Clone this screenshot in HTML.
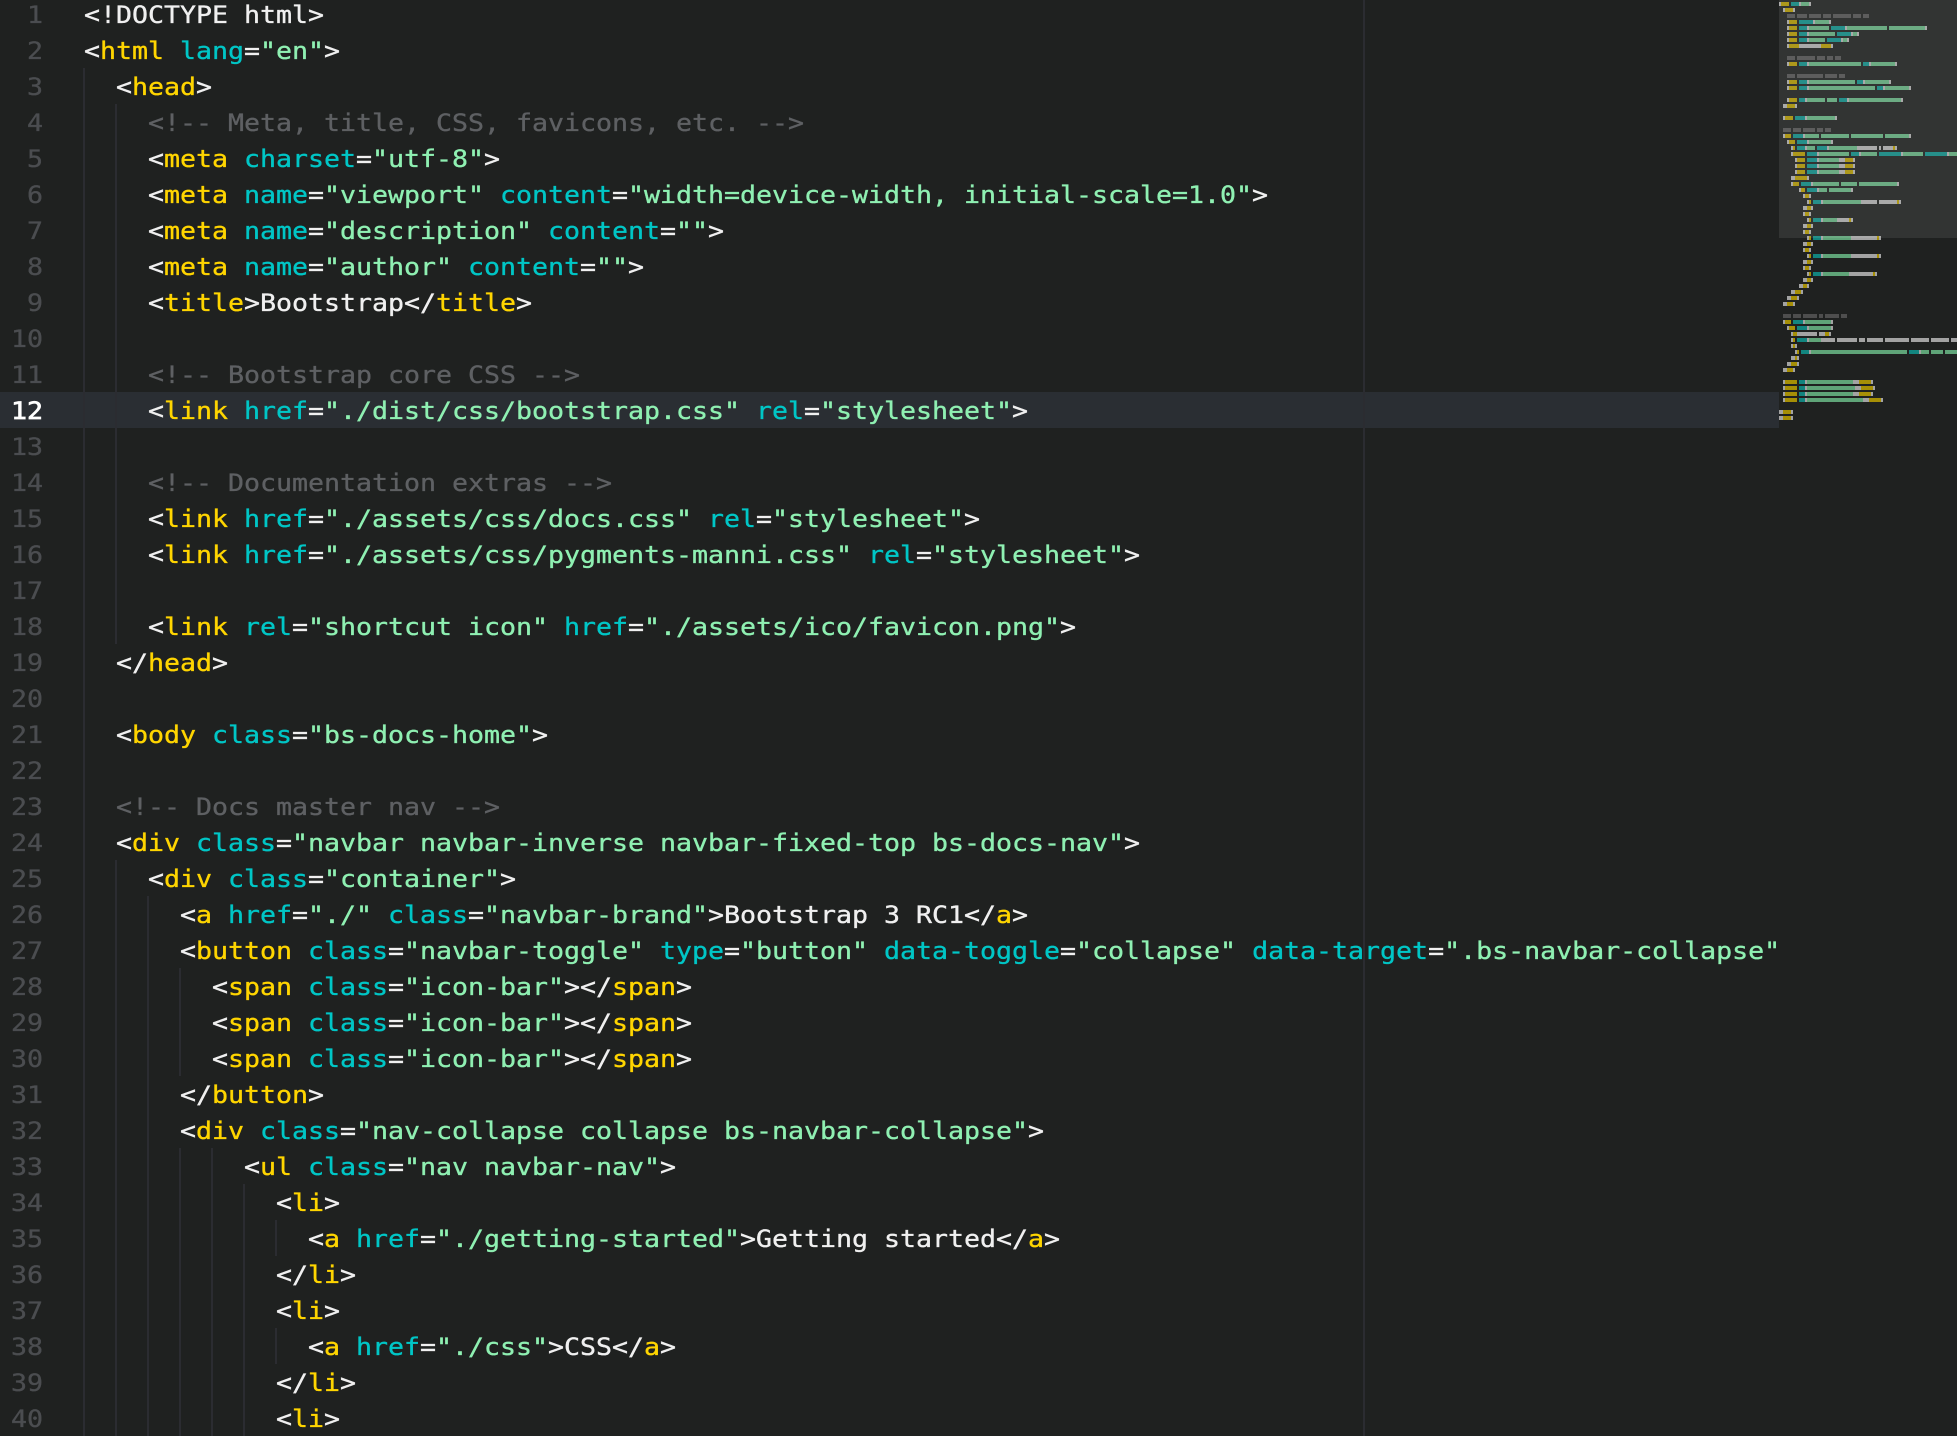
<!DOCTYPE html>
<html lang="en">
<head>
<meta charset="utf-8">
<title>Editor</title>
<style>
html,body{margin:0;padding:0;width:1957px;height:1436px;overflow:hidden;background:#1f2120}
#root{position:relative;width:1957px;height:1436px;overflow:hidden;background:#1f2120}
.hl{position:absolute;left:0;top:392px;width:1779px;height:36px;background:#2a2e33}
.g{position:absolute;width:2px;background:#2b2c31}
#clip{position:absolute;left:0;top:0;width:1779px;height:1436px;overflow:hidden}
pre{margin:0;position:absolute;font-family:"DejaVu Sans Mono","Liberation Mono",monospace;font-size:24px;line-height:36px;white-space:pre;-webkit-text-stroke:0.35px currentColor}
#num{left:0;top:-3px;width:43px;text-align:right;color:#4b4d50;transform:scaleX(1.1073);transform-origin:right top}
#num b{color:#fff;font-weight:400;-webkit-text-stroke:0.7px #fff}
#code{left:84px;top:-3px;color:#f0f0f0;transform:scaleX(1.1073);transform-origin:left top}
i{font-style:normal}
.b{color:#ffd500}.a{color:#00c6c6}.s{color:#8ff0b2}.c{color:#5e6063}
#mini{position:absolute;left:1779px;top:0}
</style>
</head>
<body>
<div id="root">
<div class="hl"></div>
<div class="g" style="left:1363px;top:0;height:1436px"></div>
<div class="g" style="left:83px;top:68px;height:1368px"></div>
<div class="g" style="left:115px;top:104px;height:540px"></div>
<div class="g" style="left:115px;top:860px;height:576px"></div>
<div class="g" style="left:147px;top:896px;height:540px"></div>
<div class="g" style="left:179px;top:968px;height:108px"></div>
<div class="g" style="left:179px;top:1148px;height:288px"></div>
<div class="g" style="left:211px;top:1148px;height:288px"></div>
<div class="g" style="left:243px;top:1184px;height:252px"></div>
<div class="g" style="left:275px;top:1220px;height:36px"></div>
<div class="g" style="left:275px;top:1328px;height:36px"></div>
<div id="clip">
<pre id="num">1
2
3
4
5
6
7
8
9
10
11
<b>12</b>
13
14
15
16
17
18
19
20
21
22
23
24
25
26
27
28
29
30
31
32
33
34
35
36
37
38
39
40</pre>
<pre id="code">&lt;!DOCTYPE html&gt;
&lt;<i class="b">html</i> <i class="a">lang</i>=<i class="s">"en"</i>&gt;
  &lt;<i class="b">head</i>&gt;
    <i class="c">&lt;!-- Meta, title, CSS, favicons, etc. --&gt;</i>
    &lt;<i class="b">meta</i> <i class="a">charset</i>=<i class="s">"utf-8"</i>&gt;
    &lt;<i class="b">meta</i> <i class="a">name</i>=<i class="s">"viewport"</i> <i class="a">content</i>=<i class="s">"width=device-width, initial-scale=1.0"</i>&gt;
    &lt;<i class="b">meta</i> <i class="a">name</i>=<i class="s">"description"</i> <i class="a">content</i>=<i class="s">""</i>&gt;
    &lt;<i class="b">meta</i> <i class="a">name</i>=<i class="s">"author"</i> <i class="a">content</i>=<i class="s">""</i>&gt;
    &lt;<i class="b">title</i>&gt;Bootstrap&lt;/<i class="b">title</i>&gt;

    <i class="c">&lt;!-- Bootstrap core CSS --&gt;</i>
    &lt;<i class="b">link</i> <i class="a">href</i>=<i class="s">"./dist/css/bootstrap.css"</i> <i class="a">rel</i>=<i class="s">"stylesheet"</i>&gt;

    <i class="c">&lt;!-- Documentation extras --&gt;</i>
    &lt;<i class="b">link</i> <i class="a">href</i>=<i class="s">"./assets/css/docs.css"</i> <i class="a">rel</i>=<i class="s">"stylesheet"</i>&gt;
    &lt;<i class="b">link</i> <i class="a">href</i>=<i class="s">"./assets/css/pygments-manni.css"</i> <i class="a">rel</i>=<i class="s">"stylesheet"</i>&gt;

    &lt;<i class="b">link</i> <i class="a">rel</i>=<i class="s">"shortcut icon"</i> <i class="a">href</i>=<i class="s">"./assets/ico/favicon.png"</i>&gt;
  &lt;/<i class="b">head</i>&gt;

  &lt;<i class="b">body</i> <i class="a">class</i>=<i class="s">"bs-docs-home"</i>&gt;

  <i class="c">&lt;!-- Docs master nav --&gt;</i>
  &lt;<i class="b">div</i> <i class="a">class</i>=<i class="s">"navbar navbar-inverse navbar-fixed-top bs-docs-nav"</i>&gt;
    &lt;<i class="b">div</i> <i class="a">class</i>=<i class="s">"container"</i>&gt;
      &lt;<i class="b">a</i> <i class="a">href</i>=<i class="s">"./"</i> <i class="a">class</i>=<i class="s">"navbar-brand"</i>&gt;Bootstrap 3 RC1&lt;/<i class="b">a</i>&gt;
      &lt;<i class="b">button</i> <i class="a">class</i>=<i class="s">"navbar-toggle"</i> <i class="a">type</i>=<i class="s">"button"</i> <i class="a">data-toggle</i>=<i class="s">"collapse"</i> <i class="a">data-target</i>=<i class="s">".bs-navbar-collapse"</i>&gt;
        &lt;<i class="b">span</i> <i class="a">class</i>=<i class="s">"icon-bar"</i>&gt;&lt;/<i class="b">span</i>&gt;
        &lt;<i class="b">span</i> <i class="a">class</i>=<i class="s">"icon-bar"</i>&gt;&lt;/<i class="b">span</i>&gt;
        &lt;<i class="b">span</i> <i class="a">class</i>=<i class="s">"icon-bar"</i>&gt;&lt;/<i class="b">span</i>&gt;
      &lt;/<i class="b">button</i>&gt;
      &lt;<i class="b">div</i> <i class="a">class</i>=<i class="s">"nav-collapse collapse bs-navbar-collapse"</i>&gt;
          &lt;<i class="b">ul</i> <i class="a">class</i>=<i class="s">"nav navbar-nav"</i>&gt;
            &lt;<i class="b">li</i>&gt;
              &lt;<i class="b">a</i> <i class="a">href</i>=<i class="s">"./getting-started"</i>&gt;Getting started&lt;/<i class="b">a</i>&gt;
            &lt;/<i class="b">li</i>&gt;
            &lt;<i class="b">li</i>&gt;
              &lt;<i class="b">a</i> <i class="a">href</i>=<i class="s">"./css"</i>&gt;CSS&lt;/<i class="b">a</i>&gt;
            &lt;/<i class="b">li</i>&gt;
            &lt;<i class="b">li</i>&gt;</pre>
</div>
<svg id="mini" width="178" height="1436" viewBox="0 0 178 1436" shape-rendering="crispEdges">
<g transform="scale(2,1)" fill="none" stroke-width="4">
<path stroke="#a3a3a3" d="M0 4h1M10 4h1M15 4h1M2 10h1M7 10h1M4 22h1M17 22h1M25 22h1M4 28h1M14 28h1M33 28h1M73 28h1M4 34h1M14 34h1M36 34h1M39 34h1M4 40h1M14 40h1M31 40h1M34 40h1M4 46h1M10 46h11M26 46h1M4 64h1M14 64h1M45 64h1M58 64h1M4 82h1M14 82h1M42 82h1M55 82h1M4 88h1M14 88h1M52 88h1M65 88h1M4 100h1M13 100h1M34 100h1M61 100h1M2 106h2M8 106h1M2 118h1M13 118h1M28 118h1M2 136h1M12 136h1M65 136h1M4 142h1M14 142h1M26 142h1M6 148h1M13 148h1M24 148h1M39 148h10M50 148h1M52 148h5M58 148h1M6 154h1M19 154h1M40 154h1M61 154h1M84 154h1M8 160h1M19 160h1M30 160h3M37 160h1M8 166h1M19 166h1M30 166h3M37 166h1M8 172h1M19 172h1M30 172h3M37 172h1M6 178h2M14 178h1M6 184h1M16 184h1M59 184h1M10 190h1M19 190h1M36 190h1M12 196h1M15 196h1M14 202h1M21 202h1M41 202h8M50 202h9M60 202h1M12 208h2M16 208h1M12 214h1M15 214h1M14 220h1M21 220h1M29 220h6M36 220h1M12 226h2M16 226h1M12 232h1M15 232h1M14 238h1M21 238h1M36 238h13M50 238h1M12 244h2M16 244h1M12 250h1M15 250h1M14 256h1M21 256h1M36 256h13M50 256h1M12 262h2M16 262h1M12 268h1M15 268h1M14 274h1M21 274h1M35 274h12M48 274h1M12 280h2M16 280h1M10 286h2M14 286h1M6 292h2M11 292h1M4 298h2M9 298h1M2 304h2M7 304h1M2 322h1M12 322h1M26 322h1M4 328h1M14 328h1M26 328h1M6 334h1M9 334h10M20 334h3M25 334h1M6 340h1M14 340h1M21 340h7M29 340h10M40 340h3M44 340h8M53 340h12M66 340h9M76 340h9M86 340h3M6 346h1M8 346h1M8 352h1M15 352h1M70 352h1M6 358h2M9 358h1M4 364h2M9 364h1M2 370h2M7 370h1M2 382h1M13 382h1M37 382h3M46 382h1M2 388h1M13 388h1M38 388h3M47 388h1M2 394h1M13 394h1M37 394h3M46 394h1M2 400h1M13 400h1M42 400h3M51 400h1M0 412h2M6 412h1M0 418h2M6 418h1"/>
<path stroke="#a68f06" d="M1 4h4M3 10h4M5 22h4M5 28h4M5 34h4M5 40h4M5 46h5M21 46h5M5 64h4M5 82h4M5 88h4M5 100h4M4 106h4M3 118h4M3 136h3M5 142h3M7 148h1M57 148h1M7 154h6M9 160h4M33 160h4M9 166h4M33 166h4M9 172h4M33 172h4M8 178h6M7 184h3M11 190h2M13 196h2M15 202h1M59 202h1M14 208h2M13 214h2M15 220h1M35 220h1M14 226h2M13 232h2M15 238h1M49 238h1M14 244h2M13 250h2M15 256h1M49 256h1M14 262h2M13 268h2M15 274h1M47 274h1M14 280h2M12 286h2M8 292h3M6 298h3M4 304h3M3 322h3M5 328h3M7 334h2M23 334h2M7 340h1M7 346h1M9 352h1M8 358h1M6 364h3M4 370h3M3 382h6M40 382h6M3 388h6M41 388h6M3 394h6M40 394h6M3 400h6M45 400h6M2 412h4M2 418h4"/>
<path stroke="#12857f" d="M6 4h4M10 22h7M10 28h4M26 28h7M10 34h4M29 34h7M10 40h4M24 40h7M10 64h4M42 64h3M10 82h4M39 82h3M10 88h4M49 88h3M10 100h3M30 100h4M8 118h5M7 136h5M9 142h5M9 148h4M19 148h5M14 154h5M36 154h4M50 154h11M73 154h11M14 160h5M14 166h5M14 172h5M11 184h5M14 190h5M17 202h4M17 220h4M17 238h4M17 256h4M17 274h4M7 322h5M9 328h5M9 340h5M11 352h4M65 352h5M10 382h3M10 388h3M10 394h3M10 400h3"/>
<path stroke="#5fa478" d="M11 4h4M18 22h7M15 28h10M34 28h20M55 28h18M15 34h13M37 34h2M15 40h8M32 40h2M15 64h26M46 64h12M15 82h23M43 82h12M15 88h33M53 88h12M14 100h9M24 100h5M35 100h26M14 118h14M13 136h7M21 136h14M36 136h16M53 136h12M15 142h11M14 148h4M25 148h14M20 154h15M41 154h8M62 154h10M85 154h21M20 160h10M20 166h10M20 172h10M17 184h13M31 184h8M40 184h19M20 190h4M25 190h11M22 202h19M22 220h7M22 238h14M22 256h14M22 274h13M13 322h13M15 328h11M15 340h6M16 352h48M71 352h4M76 352h6M83 352h20M14 382h23M14 388h24M14 394h23M14 400h28"/>
<path stroke="#4e4e4e" d="M4 16h4M9 16h5M15 16h6M22 16h4M27 16h9M37 16h4M42 16h3M4 58h4M9 58h9M19 58h4M24 58h3M28 58h3M4 76h4M9 76h13M23 76h6M30 76h3M2 130h4M7 130h4M12 130h6M19 130h3M23 130h3M2 316h4M7 316h4M12 316h7M20 316h2M23 316h7M31 316h3"/>
</g>
<rect x="0" y="0" width="178" height="238" fill="#fff" fill-opacity="0.085"/>
</svg>
</div>
</body>
</html>
